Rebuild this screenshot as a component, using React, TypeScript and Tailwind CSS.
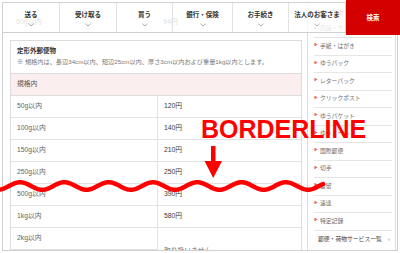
import React from 'react';

const font = "font-['Liberation_Sans','Noto_Sans_CJK_JP',sans-serif]";

const navItems = [
  { label: '送る', cls: 'w-[56px]' },
  { label: '受け取る', cls: 'w-[57px] border-l border-[#e2e2e2]' },
  { label: '買う', cls: 'w-[56px] border-l border-[#e2e2e2]' },
  { label: '銀行・保険', cls: 'w-[60px] border-l border-[#e2e2e2]' },
  { label: 'お手続き', cls: 'w-[56px] border-l border-[#e2e2e2]' },
  { label: '法人のお客さま', cls: 'w-[57px] border-l border-[#e2e2e2]' },
];

const rows = [
  { size: '50g以内', price: '120円' },
  { size: '100g以内', price: '140円' },
  { size: '150g以内', price: '210円' },
  { size: '250g以内', price: '250円' },
  { size: '500g以内', price: '390円' },
  { size: '1kg以内', price: '580円' },
];

const services = [
  '手紙・はがき',
  'ゆうパック',
  'レターパック',
  'クリックポスト',
  'ゆうパケット',
  'ゆうメール',
  '国際郵便',
  '切手',
  '書留',
  '速達',
  '特定記録',
];

function Chevron() {
  return (
    <svg width="6" height="4" viewBox="0 0 6 4" className="mt-[4px]">
      <polyline points="0.5,0.8 3,3 5.5,0.8" fill="none" stroke="#9a9a9a" strokeWidth="0.8" />
    </svg>
  );
}

function wavePath() {
  // red wavy "cut" line
  const pts: string[] = [];
  for (let x = 0; x <= 323; x += 1) {
    const y = 186 - 3.75 * Math.sin((2 * Math.PI * (x - 9)) / 44.3);
    pts.push(`${x},${y.toFixed(2)}`);
  }
  return pts.join(' ');
}

export default function App() {
  return (
    <div className={`relative w-[400px] h-[253px] overflow-hidden bg-white ${font}`}>
      {/* page frame */}
      <div className="mx-[2px] mt-[2px] h-[249px] border border-[#cfcfcf] overflow-hidden flex">
        {/* main column */}
        <div className="w-[302px] pl-[7px] shrink-0">
          {/* previous section, scrolled under the header */}
          <div className="h-[37px] pt-[14px] flex text-[7px] leading-[10px] text-[#666]">
            <span className="w-[147px] pl-[6px]">50g以内</span>
            <span className="pl-[6px] text-[#444]">94円</span>
          </div>

          <div className="w-[292px] border border-[#dcdcdc]">
            <div className="px-[6px] pt-[5px] pb-[7px] border-b border-[#dcdcdc]">
              <div className="text-[6.5px] leading-[10px] font-bold text-[#333]">定形外郵便物</div>
              <div className="mt-[1px] text-[6.2px] leading-[9px] text-[#777] whitespace-nowrap">
                ※ 規格内は、長辺34cm以内、短辺25cm以内、厚さ3cm以内および重量1kg以内とします。
              </div>
            </div>
            <div className="h-[22px] flex items-center px-[6px] bg-[#fbeeee] border-b border-[#dcdcdc] text-[6.8px] text-[#555]">
              規格内
            </div>
            <div className="grid grid-cols-[146px_1fr] text-[6.8px]">
              {rows.map((r) => (
                <React.Fragment key={r.size}>
                  <div className="h-[22px] flex items-center pl-[6px] border-b border-[#e2e2e2] text-[#666]">{r.size}</div>
                  <div className="h-[22px] flex items-center pl-[6px] border-b border-l border-[#e2e2e2] text-[#3a3a3a]">{r.price}</div>
                </React.Fragment>
              ))}
              <div className="h-[22px] flex items-center pl-[6px] border-b border-[#e2e2e2] text-[#666]">2kg以内</div>
              <div className="row-span-2 flex items-center pl-[6px] pt-[4px] border-b border-l border-[#e2e2e2] text-[#666]">取り扱いません</div>
              <div className="h-[22px] flex items-center pl-[6px] border-b border-[#e2e2e2] text-[#666]">4kg以内</div>
            </div>
          </div>
        </div>

        {/* service sidebar */}
        <div className="ml-[2px] w-[89px] shrink-0 border-l border-r border-[#dcdcdc] pl-[6px] pr-[3px]">
          <div className="h-[34px] pt-[6px] text-[5.8px] leading-[9px] text-[#777]">
            <div>郵便・荷物</div>
            <div className="mt-[6px] flex items-center gap-[3px]">
              <span className="text-[5px]">▾</span>
              <span>商品・サービス</span>
            </div>
          </div>
          <div className="border-t border-[#e3e3e3]">
            {services.map((s) => (
              <div key={s} className="h-[17.5px] flex items-center border-b border-[#e6e6e6] text-[5.8px] text-[#6a6a6a]">
                <span className="text-[#d66] text-[3.8px] w-[6px]">▶</span>
                <span>{s}</span>
              </div>
            ))}
            <div className="h-[17.5px] flex items-center justify-between pl-[4px] text-[5.8px] text-[#444]">
              <span>郵便・荷物サービス一覧</span>
              <span className="text-[#c66] pr-[2px]">›</span>
            </div>
          </div>
        </div>
      </div>

      {/* global header, laid over the page */}
      <div className="absolute top-0 left-0 w-[400px] flex items-start">
        <div className="ml-[2px] mt-[2px] h-[31px] flex border border-[#d0d0d0] bg-white/80">
          {navItems.map((n) => (
            <div key={n.label} className={`${n.cls} h-full flex flex-col items-center pt-[8px]`}>
              <span className="text-[6.5px] leading-[8px] font-bold text-[#333] whitespace-nowrap">{n.label}</span>
              <Chevron />
            </div>
          ))}
        </div>
        <div className="w-[55px] h-[35px] bg-[#d40000] flex items-center justify-center">
          <span className="text-[6.5px] font-bold text-white">検索</span>
        </div>
      </div>

      {/* annotation */}
      <div className="absolute left-[201px] top-[117px] text-[25px] leading-[25px] font-bold text-[#ff0000] font-['Liberation_Sans',sans-serif]">
        BORDERLINE
      </div>
      <svg className="absolute left-0 top-0 pointer-events-none" width="400" height="253" viewBox="0 0 400 253">
        <rect x="211" y="146" width="4.5" height="18" fill="#ff0000" />
        <polygon points="204.5,161 222,161 213.25,178" fill="#ff0000" />
        <polyline points={wavePath()} fill="none" stroke="#ff0000" strokeWidth="4.5" strokeLinecap="round" strokeLinejoin="round" />
      </svg>
    </div>
  );
}
